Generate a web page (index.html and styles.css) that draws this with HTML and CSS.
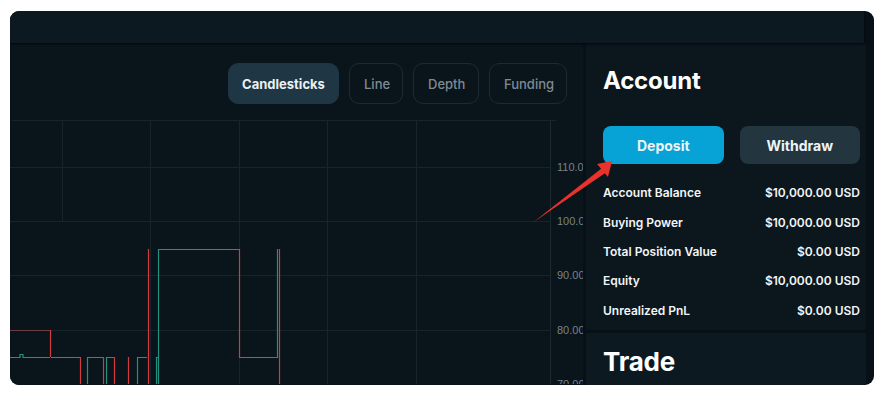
FILE: index.html
```html
<!DOCTYPE html>
<html>
<head>
<meta charset="utf-8">
<link rel="stylesheet" href="styles.css">
</head>
<body>
<div class="app">
  <div class="topbar"></div>
  <div class="main">
    <section class="chart">
      <div class="toolbar">
        <button class="tab active">Candlesticks</button>
        <button class="tab">Line</button>
        <button class="tab">Depth</button>
        <button class="tab">Funding</button>
      </div>
      <div class="plot">
        <svg class="plot-svg" width="573" height="264" viewBox="10 121 573 264">
          <g stroke="#17242b" stroke-width="1" fill="none">
            <line x1="12" y1="121.5" x2="556" y2="121.5"/>
            <line x1="10" y1="168.5" x2="550" y2="168.5"/>
            <line x1="10" y1="222.5" x2="550" y2="222.5"/>
            <line x1="10" y1="276.5" x2="550" y2="276.5"/>
            <line x1="10" y1="331.5" x2="550" y2="331.5"/>
            <line x1="62.5" y1="122" x2="62.5" y2="222"/>
            <line x1="150.5" y1="122" x2="150.5" y2="385"/>
            <line x1="239.5" y1="122" x2="239.5" y2="385"/>
            <line x1="327.5" y1="122" x2="327.5" y2="385"/>
            <line x1="416.5" y1="122" x2="416.5" y2="385"/>
            <line x1="550.5" y1="122" x2="550.5" y2="385" stroke="#1b2930"/>
          </g>
          <g fill="#77828a" font-family="'Liberation Sans', Arial, sans-serif" font-size="11">
            <text x="557" y="172">110.00</text>
            <text x="557" y="226">100.00</text>
            <text x="557" y="280">90.00</text>
            <text x="557" y="335">80.00</text>
            <text x="557" y="389">70.00</text>
          </g>
          <g fill="none" stroke-width="1.2">
            <path d="M10 331.5 H50" stroke="#6a3c40"/>
            <path d="M50.5 331 V358" stroke="#d23a3f"/>
            <path d="M10 358.5 H20 V355.5 H23 V358.5 H50" stroke="#23917f"/>
            <path d="M51 358.5 H80" stroke="#23917f"/>
            <path d="M80.5 358 V385" stroke="#d23a3f"/>
            <path d="M87.5 385 V358.5 H103" stroke="#23917f"/>
            <path d="M103.5 358 V385" stroke="#d23a3f"/>
            <path d="M106.5 385 V358.5 H114" stroke="#23917f"/>
            <path d="M114.5 358 V385" stroke="#d23a3f"/>
            <path d="M128.5 358 V385" stroke="#d23a3f"/>
            <path d="M137.5 385 V358.5 H147" stroke="#23917f"/>
            <path d="M148.5 250 V385" stroke="#d23a3f"/>
            <path d="M156.5 385 V358.5 H158" stroke="#23917f"/>
            <path d="M158.5 385 V250.5 H239" stroke="#23917f"/>
            <path d="M239.5 250 V358" stroke="#d23a3f"/>
            <path d="M239 358.5 H277.5 V250" stroke="#23917f"/>
            <path d="M279.5 250 V385" stroke="#d23a3f"/>
          </g>
        </svg>
      </div>
    </section>
    <aside class="side">
      <div class="account">
        <h2 class="heading">Account</h2>
        <div class="actions">
          <button class="btn deposit">Deposit</button>
          <button class="btn withdraw">Withdraw</button>
        </div>
        <dl class="stats">
          <div class="row"><dt>Account Balance</dt><dd>$10,000.00 USD</dd></div>
          <div class="row"><dt>Buying Power</dt><dd>$10,000.00 USD</dd></div>
          <div class="row"><dt>Total Position Value</dt><dd>$0.00 USD</dd></div>
          <div class="row"><dt>Equity</dt><dd>$10,000.00 USD</dd></div>
          <div class="row"><dt>Unrealized PnL</dt><dd>$0.00 USD</dd></div>
        </dl>
      </div>
      <div class="trade">
        <h2 class="heading trade-heading">Trade</h2>
      </div>
    </aside>
    <svg class="annotation" width="885" height="395" viewBox="0 0 885 395">
      <polygon points="533,222.5 602,168 606,172.5" fill="#e8322b"/>
      <polygon points="612,161 597,164 608,177" fill="#e8322b"/>
    </svg>
  </div>
</div>
</body>
</html>
```

FILE: styles.css
```css
* { box-sizing: border-box; }
html, body { margin: 0; padding: 0; background: #ffffff; }
body {
  font-family: Inter, "Liberation Sans", sans-serif;
  width: 885px;
  height: 395px;
  overflow: hidden;
}
.app {
  margin: 11px 0 0 10px;
  width: 864px;
  height: 374px;
  border-radius: 9px;
  background: #071016;
  overflow: hidden;
  display: flex;
  flex-direction: column;
}
.topbar {
  height: 32px;
  flex: none;
  background: #0c1920;
  box-shadow: 0 1px 2px rgba(0,0,0,0.6);
  position: relative;
  z-index: 1;
  margin-right: 10px;
}
.main {
  flex: 1;
  display: flex;
  gap: 3px;
  padding-top: 1px;
  padding-right: 8px;
  min-height: 0;
}
.annotation {
  position: fixed;
  left: 0;
  top: 0;
  pointer-events: none;
  z-index: 5;
}
.chart {
  width: 573px;
  flex: none;
  background: #0a151b;
  display: flex;
  flex-direction: column;
  overflow: hidden;
}
.toolbar {
  height: 76px;
  flex: none;
  display: flex;
  justify-content: flex-end;
  align-items: flex-start;
  gap: 10px;
  padding: 19px 16px 0 0;
}
.tab {
  height: 41px;
  padding: 0 14px;
  border: 1px solid #1d2a31;
  border-radius: 10px;
  background: transparent;
  color: #7f8b93;
  font-family: Inter, "Liberation Sans", sans-serif;
  font-size: 13px;
  font-weight: 500;
}
.tab.active {
  background: #1f3645;
  border-color: #1f3645;
  color: #e9f0f4;
  font-weight: 700;
  padding: 0 12px;
  width: 111px;
}
.tab:nth-child(2) { width: 54px; }
.tab:nth-child(3) { width: 66px; }
.tab:nth-child(4) { width: 78px; }
.plot {
  flex: 1;
  min-height: 0;
}
.plot-svg { display: block; }
.side {
  width: 280px;
  flex: none;
  display: flex;
  flex-direction: column;
  gap: 3px;
}
.account {
  background: #0b161d;
  height: 286px;
  flex: none;
  padding: 21px 6px 0 17px;
}
.heading {
  margin: 0;
  color: #ffffff;
  font-size: 24px;
  font-weight: 700;
  line-height: 32px;
  letter-spacing: -0.2px;
}
.actions {
  display: flex;
  gap: 16px;
  margin-top: 29px;
}
.btn {
  width: 121px;
  height: 38px;
  border: none;
  border-radius: 8px;
  font-family: Inter, "Liberation Sans", sans-serif;
  font-size: 14px;
  font-weight: 700;
  color: #eef5f8;
}
.deposit { background: #07a2d6; }
.withdraw { background: #23363f; }
.stats {
  margin: 14px 0 0 0;
  padding: 0;
  display: flex;
  flex-direction: column;
}
.row {
  display: flex;
  justify-content: space-between;
  align-items: center;
  height: 29.4px;
  color: #f2f5f7;
  font-size: 12px;
  font-weight: 600;
}
.row dt, .row dd { margin: 0; }
.trade {
  flex: 1;
  background: #0c1920;
  padding: 13px 17px 0;
}
.trade-heading {
  font-size: 26px;
}
```
